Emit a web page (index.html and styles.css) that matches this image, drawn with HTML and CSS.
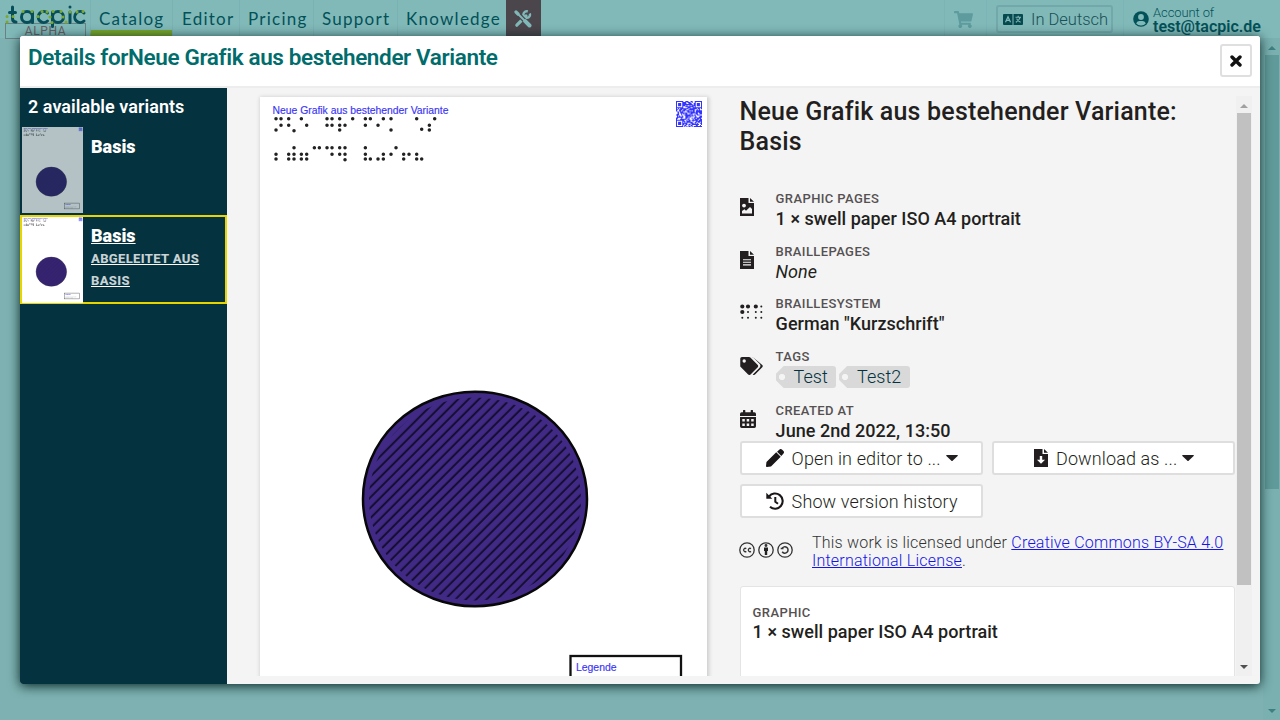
FILE: index.html
```html
<!DOCTYPE html>
<html lang="en">
<head>
<meta charset="utf-8">
<title>tacpic – Catalog</title>
<link rel="stylesheet" href="styles.css">
</head>
<body>
<svg class="defs" aria-hidden="true">
  <defs>
    <pattern id="hatch" width="7.350" height="7.350" patternUnits="userSpaceOnUse" patternTransform="rotate(-45)"><path d="M0 3.5H8" stroke="#130c2c" stroke-width="1.900"/></pattern>
    <symbol id="sheet" viewBox="260 97 447 632" preserveAspectRatio="none">
      <rect x="260" y="97" width="447" height="632" fill="#fff"/>
      <text class="sheet-text" x="272.5" y="114" textLength="176" lengthAdjust="spacingAndGlyphs">Neue Grafik aus bestehender Variante</text>
      <g transform="translate(250 88) scale(.33333)" fill="none" stroke="#222" stroke-width="10.500" stroke-linecap="round">
        <path d="M78 92h.1M93 92h.1M116 92h.1M154 92h.1M231 92h.1M246 92h.1M269 92h.1M308 92h.1M346 92h.1M361 92h.1M400 92h.1M423 92h.1M500 92h.1M554 92h.1"/>
        <path d="M93 112h.1M116 112h.1M170 112h.1M231 112h.1M246 112h.1M269 112h.1M285 112h.1M346 112h.1M384 112h.1M538 112h.1M78 126h.1M132 128h.1M269 126h.1M423 126h.1M515 124h.1M538 126h.1"/>
        <path d="M132 179h.1M193 179h.1M208 179h.1M231 179h.1M246 179h.1M269 179h.1M285 179h.1M346 179h.1M438 179h.1"/>
        <path d="M78 199h.1M116 199h.1M132 199h.1M154 199h.1M170 199h.1M246 199h.1M269 199h.1M285 199h.1M346 199h.1M400 199h.1M423 199h.1M461 199h.1M477 199h.1M500 199h.1"/>
        <path d="M78 213h.1M116 213h.1M132 213h.1M154 213h.1M170 213h.1M285 215h.1M346 213h.1M361 213h.1M384 213h.1M400 213h.1M461 213h.1M500 213h.1M515 213h.1"/>
      </g>
      <g id="qr" stroke="#3434ff" stroke-width="1.05"></g>
      <ellipse cx="475" cy="499" rx="112" ry="107.3" fill="#402a85" stroke="#080808" stroke-width="2.5"/>
      <ellipse cx="475" cy="499" rx="106" ry="101.500" fill="url(#hatch)"/>
      <rect x="570.5" y="656" width="110.500" height="43" fill="#fff" stroke="#111" stroke-width="2.300"/>
      <text class="sheet-text" x="576" y="671" textLength="40.500" lengthAdjust="spacingAndGlyphs">Legende</text>
      <path d="M577 684h45M630 684h30M577 691h60" stroke="#555" stroke-width="2" stroke-dasharray="3 3"/>
    </symbol>
    <symbol id="caret" viewBox="0 0 12 6"><path d="M.6 0h10.800q.8.200.2.900L6.600 5.700q-.6.500-1.200 0L.4.900Q-.1.200.6 0z" fill="currentColor"/></symbol>
  </defs>
</svg>

<div class="page">
  <header class="topbar">
    <div class="brand">
      <svg class="logo" width="84" height="28" viewBox="0 0 84 28">
        <g fill="none" stroke="#064f5a" stroke-width="3" stroke-linecap="round">
          <path d="M7.500 4v11.500q0 3.500 3.500 3.500M4.500 9.500h6"/><circle cx="22" cy="14" r="5.500"/><path d="M27.500 9v10.500M42.500 10a5.500 5.500 0 1 0 0 8"/><circle cx="53" cy="14" r="5.500"/><path d="M47.500 9v14.500M65 9v10.500M65 4v.1M79 10a5.500 5.500 0 1 0 0 8"/>
        </g>
        <path d="M2 13.500h.1M2 19h.1M8 13.500h.1M18 8.500h.1M27 8.500h.1M33 13.500h.1M37 8.500h.1M42 9h.1M45 14h.1M48 8.500h.1M56 8.500h.1M58 14h.1M47 19.500h.1M61 19h.1M65 9h.1M72 9h.1M78 8.500h.1" stroke="#7ba92d" stroke-width="3" stroke-linecap="round"/>
      </svg>
      <div class="alpha">ALPHA</div>
    </div>
    <nav class="nav">
      <a class="nav-item nav-catalog active"><span>Catalog</span></a>
      <a class="nav-item nav-editor"><span>Editor</span></a>
      <a class="nav-item nav-pricing"><span>Pricing</span></a>
      <a class="nav-item nav-support"><span>Support</span></a>
      <a class="nav-item nav-knowledge"><span>Knowledge</span></a>
      <a class="tools"><svg width="18" height="18" viewBox="0 0 18 18" fill="none" stroke="#80b7b7" stroke-linecap="round"><path d="M2.800 15.200L12 6" stroke-width="3.200"/><path d="M15.800 3.500a3.300 3.300 0 1 1-2-2" stroke-width="2.400" stroke-linecap="butt"/><path d="M3 3l12 12" stroke="#4b454c" stroke-width="4.500" stroke-linecap="butt"/><path d="M2 2l2 2" stroke-width="3.200"/><path d="M3 3l7 7" stroke-width="1.900"/><path d="M11.200 11.200l4.300 4.300" stroke-width="4"/></svg></a>
    </nav>
    <div class="cart"><svg width="19" height="17" viewBox="0 0 576 512"><path fill="#5d9b9e" d="M528 302l47-208c4-15-8-30-23-30H159l-9-45C148 8 138 0 126 0H24C11 0 0 11 0 24v16c0 13 11 24 24 24h70l70 343a56 56 0 1 0 67 9h210a56 56 0 1 0 63-11l6-25c3-15-8-29-24-29H218l-7-32h294c11 0 21-8 23-17z"/></svg></div>
    <div class="lang-wrap"><button class="lang"><svg width="20" height="11" viewBox="0 0 20 12" preserveAspectRatio="none"><path d="M0 1q0-1 1-1h8.500v12H1q-1 0-1-1zM10.500 0H19q1 0 1 1v10q0 1-1 1h-8.500z" fill="#06494f"/><path d="M2.500 9L5 3l2.500 6M3.500 7h3M12.500 3.500h5.500M15.200 2v1.500M17 4q-.7 3-4.200 5M13.600 5q1 2.500 4 4" fill="none" stroke="#81b9b9" stroke-width="1.200"/></svg><span>In Deutsch</span></button></div>
    <div class="account">
      <svg width="16" height="16" viewBox="0 0 16 16"><circle cx="8" cy="8" r="7.800" fill="#035158"/><circle cx="8" cy="6" r="2.900" fill="#81b9b9"/><path d="M3.200 12.500q.6-2.600 3-2.600h3.600q2.400 0 3 2.600A6.200 6.200 0 0 1 8 14.500a6.200 6.200 0 0 1-4.800-2z" fill="#81b9b9"/></svg>
      <div class="account-text"><span class="small">Account of</span><strong>test@tacpic.de</strong></div>
    </div>
  </header>
  <div class="page-scroll"><i class="arrow up"></i><i class="thumb"></i><i class="arrow down"></i></div>
</div>

<div class="modal">
  <div class="modal-head">
    <h1>Details forNeue Grafik aus bestehender Variante</h1>
    <button class="close"><svg width="12" height="12" viewBox="0 0 12 12"><path d="M2 2l8 8M10 2l-8 8" stroke="#111" stroke-width="3.400" stroke-linecap="round"/></svg></button>
  </div>
  <div class="modal-body">
    <aside class="variants">
      <h2>2 available variants</h2>
      <div class="variant"><svg class="thumbnail dim"><use href="#sheet"/></svg><div class="variant-text"><b>Basis</b></div></div>
      <div class="variant selected"><svg class="thumbnail"><use href="#sheet"/></svg><div class="variant-text"><b>Basis</b><small>ABGELEITET AUS BASIS</small></div></div>
    </aside>
    <div class="preview"><svg class="sheet" width="447" height="632"><use href="#sheet"/></svg></div>
    <section class="details">
      <h2>Neue Grafik aus bestehender Variante: Basis</h2>
      <div class="rows">
        <div class="row"><svg class="ic" width="14" height="18" viewBox="0 0 14 18"><path d="M0 0h8.500v5H14v13H0zM10 0l4 3.800h-4z" fill="#231f20"/><circle cx="4" cy="7.600" r="1.900" fill="#f4f4f4"/><path d="M2 15.500v-2.500l2.500-1.700 1.500 1.500 4-3.800 2 2v4.500z" fill="#f4f4f4"/></svg><div><label>GRAPHIC PAGES</label><p>1 × swell paper ISO A4 portrait</p></div></div>
        <div class="row"><svg class="ic" width="14" height="18" viewBox="0 0 14 18"><path d="M0 0h8.500v5H14v13H0zM10 0l4 3.800h-4z" fill="#231f20"/><path d="M3 8.700h8M3 11.300h8M3 13.900h8" stroke="#f4f4f4" stroke-width="1.100"/></svg><div><label>BRAILLEPAGES</label><p class="none">None</p></div></div>
        <div class="row"><svg class="ic braille" width="24" height="16" viewBox="0 0 24 16" fill="none" stroke="#231f20" stroke-linecap="round"><path d="M2.300 2.500h.01M8 2.500h.01M2.300 8h.01M15.800 2.500h.01" stroke-width="4.200"/><path d="M8 8h.01M2.300 13.700h.01M8 13.700h.01M15.800 8h.01M15.800 13.700h.01M21.300 2.500h.01M21.300 8h.01M21.300 13.700h.01" stroke-width="2"/></svg><div><label>BRAILLESYSTEM</label><p>German "Kurzschrift"</p></div></div>
        <div class="row"><svg class="ic tag-ic" width="23" height="18" viewBox="0 0 640 512"><path fill="#231f20" d="M498 225L287 14A48 48 0 0 0 253 0H48C21 0 0 21 0 48v205c0 13 5 25 14 34l211 211c19 19 49 19 68 0l205-205c18-19 18-49 0-68zM112 160a48 48 0 1 1 0-96 48 48 0 0 1 0 96zm514 133L421 498c-19 19-49 19-68 0l195-195c36-36 36-72 0-108L354 0h-18q24 0 35 14l255 211c18 19 18 49 0 68z"/><path fill="none" stroke="#f4f4f4" stroke-width="28" d="M313 0l206 207q50 50 0 100L330 500"/></svg><div><label>TAGS</label><div class="tags"><span class="tag">Test</span><span class="tag tag2">Test2</span></div></div></div>
        <div class="row"><svg class="ic" width="16" height="18" viewBox="0 0 16 18"><path d="M0 6V4q0-1.700 1.700-1.700H3V.5q0-.5.500-.5h1.300q.5 0 .5.500v1.800h5.400V.5q0-.5.500-.5h1.300q.5 0 .5.500v1.800h1.300Q16 2.300 16 4v2zM0 7h16v9.300q0 1.700-1.700 1.700H1.700Q0 18 0 16.300z" fill="#231f20"/><path d="M2.300 9h2.500v2.500H2.300zm4.400 0h2.500v2.500H6.700zm4.500 0h2.500v2.500h-2.500zm-8.900 4.500h2.500V16H2.300zm4.400 0h2.500V16H6.700zm4.500 0h2.500V16h-2.500z" fill="#f4f4f4"/></svg><div><label>CREATED AT</label><p>June 2nd 2022, 13:50</p></div></div>
      </div>
      <div class="buttons">
        <button class="btn"><svg width="18" height="18" viewBox="0 0 512 512"><path fill="#1b1718" d="M291 93l128 128-277 277-114 14C12 514-2 500 0 485l13-115zm207-33l-46-46c-19-19-49-19-68 0l-69 62 121 121 62-69c19-19 19-49 0-68z"/></svg><span>Open in editor to ...</span><svg width="12" height="6"><use href="#caret"/></svg></button>
        <button class="btn"><svg width="14" height="18" viewBox="0 0 14 18"><path d="M0 0h8.500v5H14v13H0zM10 0l4 3.800h-4z" fill="#231f20"/><path d="M5.800 7h2.400v3.800H11l-4 4-4-4h2.800z" fill="#fff"/></svg><span>Download as ...</span><svg width="12" height="6"><use href="#caret"/></svg></button>
        <button class="btn"><svg width="18" height="18" viewBox="0 0 18 18" fill="none" stroke="#1b1718"><path d="M3 4.500A7.600 7.600 0 1 1 4 14.800" stroke-width="2.100"/><path d="M.3.700v6h6z" fill="#1b1718" stroke="none"/><path d="M9.300 5v4.800l2.700 2" stroke-width="2"/></svg><span>Show version history</span></button>
      </div>
      <div class="license">
        <svg width="54" height="16" viewBox="0 0 54 16" fill="none" stroke="#333" stroke-width="1.300"><circle cx="8" cy="8" r="7.200"/><circle cx="27" cy="8" r="7.200"/><circle cx="46" cy="8" r="7.200"/><path d="M7.300 6.600a1.700 1.700 0 1 0 0 2.800M12 6.600a1.700 1.700 0 1 0 0 2.800"/><circle cx="27" cy="3.500" r=".8" fill="#333"/><path d="M25 5.500h4v3.500h-.8v4h-2.400V9H25z" fill="#222" stroke="none"/><path d="M43 6.500a3.200 3.200 0 1 1 .2 3.300M41.700 6.500h2.800" stroke-width="1.500"/></svg>
        <p>This work is licensed under <a href="#">Creative Commons BY-SA 4.0 International License</a>.</p>
      </div>
      <div class="card"><label>GRAPHIC</label><p>1 × swell paper ISO A4 portrait</p></div>
    </section>
    <div class="inner-scroll"><i class="arrow up"></i><i class="thumb"></i><i class="arrow down"></i></div>
  </div>
</div>
<script src="qr.js"></script>
</body>
</html>
```

FILE: styles.css
```css
* { box-sizing: border-box; }
body { margin: 0; width: 1280px; height: 720px; overflow: hidden; background: #7eb2b2; font-family: Roboto, "Liberation Sans", sans-serif; font-size: 18px; color: #231f20; }
h1, h2, p { margin: 0; }
button { font: inherit; color: inherit; margin: 0; padding: 0; }
svg { flex: none; display: block; }
.defs { position: absolute; width: 0; height: 0; }
.sheet-text { font: 10px "Liberation Sans", sans-serif; fill: #3b35f5; stroke: #3b35f5; stroke-width: .15px; }
.page { height: 720px; }
.topbar { height: 38px; display: flex; background: #81b9b9; color: #035158; }
.brand { width: 90px; padding: 3px 0 0 5px; }
.logo { margin-bottom: -11px; }
.alpha { width: 81px; height: 16px; border: 1px solid #6c7f82; color: #6b5c63; font-size: 12px; line-height: 15px; text-align: center; letter-spacing: .6px; margin-top: 3px; }
.nav { display: flex; }
.nav-item { border-left: 1px solid #7ab1b2; padding-left: 8px; font: 400 17px/38px Lato, sans-serif; letter-spacing: 1.250px; white-space: nowrap; }
.nav-catalog { width: 82px; }
.nav-editor { width: 67px; padding-left: 9px; }
.nav-pricing { width: 74px; }
.nav-support { width: 84px; }
.nav-knowledge { width: 109px; }
.active { border-bottom: 8px solid #78a52c; }
.tools { width: 35px; background: #4b454c; padding: 10px 0 0 8px; }
.cart { width: 42px; margin-left: 403px; padding: 11px 0 0 9px; border-left: 1px solid #7cb3b4; }
.lang-wrap { width: 137px; padding: 5px 0 0 9px; border-left: 1px solid #7cb3b4; }
.lang { width: 117px; height: 28px; display: flex; align-items: center; padding-left: 5px; gap: 8px; border: 2px solid #72a8a9; border-radius: 3px; background: transparent; color: #195055; font-size: 16.500px; font-weight: 300; white-space: nowrap; }
.account { display: flex; gap: 4px; padding-top: 5px; border-left: 1px solid #7cb3b4; padding-left: 9px; flex: 1; }
.account svg { margin-top: 6px; }
.account-text { display: flex; flex-direction: column; line-height: 14px; font-size: 16px; }
.small { font-size: 13px; line-height: 15px; font-weight: 300; letter-spacing: -.1px; }
.account strong { font-weight: 600; }
.page-scroll { width: 17px; height: 682px; margin-left: auto; background: #7ab0b0; display: flex; flex-direction: column; align-items: center; color: #3e7f80; }
.page-scroll .thumb { width: 14px; height: 434px; background: #619a9a; margin-top: 5px; }
.arrow { border: 4px solid transparent; width: 0; height: 0; }
.arrow.up { border-top: 0; border-bottom-color: currentColor; margin-top: 8px; }
.arrow.down { border-bottom: 0; border-top-color: currentColor; margin: auto 0 7px; }
.modal { position: absolute; left: 20px; top: 36px; width: 1240px; height: 648px; background: #f4f4f4; border-radius: 3px; overflow: hidden; box-shadow: 0 2px 12px rgba(0,30,30,.95); }
.modal-head { height: 52px; background: #fff; border-bottom: 2px solid #ededed; padding: 8px 8px 0; display: flex; justify-content: space-between; }
.modal-head h1 { color: #006c6c; font-size: 22.500px; line-height: 27px; font-weight: 600; letter-spacing: -.365px; white-space: nowrap; }
.close { width: 32px; height: 33px; border: 2px solid #dfdfdf; border-radius: 3px; background: #fff; display: grid; place-items: center; }
.modal-body { height: 596px; display: flex; }
.variants { width: 207px; background: #04333f; color: #fff; }
.variants h2 { height: 38px; font-size: 18px; line-height: 38px; padding-left: 8px; font-weight: 600; letter-spacing: .04px; }
.variant { height: 89px; display: flex; padding: 1px 2px; border: 0; }
.thumbnail { width: 61px; height: 86px; }
.thumbnail.dim { opacity: .7; }
.variant-text { padding: 8px 10px 0 8px; line-height: 24px; font-weight: 700; }
.variant-text b, .variant-text small { display: block; }
.variant-text small { font-size: 13px; line-height: 22px; letter-spacing: .35px; color: #c9d2d5; font-weight: 800; }
.selected { border: 2px solid #e8d500; padding: 0; text-decoration: underline; }
.selected .variant-text { padding-top: 7px; }
.preview { width: 500px; height: 588px; padding: 9px 0 0 33px; overflow: hidden; }
.sheet { box-shadow: 1px 1px 4px 1px rgba(0,0,0,.17); }
.details { width: 509px; height: 588px; overflow: hidden; padding: 9px 1px 0 12.600px; }
.details h2 { font-size: 25px; line-height: 30px; font-weight: 500; height: 93px; letter-spacing: .19px; }
.rows { display: grid; grid-template-rows: 52.500px 52.500px 53px 54px 39px; }
.row { display: grid; grid-template-columns: 36px 1fr; }
.ic { margin-top: 8px; }
.braille { margin-top: 9px; }
.tag-ic { margin-top: 9px; }
label { display: block; font-size: 13px; line-height: 18px; font-weight: 500; letter-spacing: .4px; color: #555152; }
.row p, .card p { line-height: 22px; font-weight: 500; letter-spacing: .04px; white-space: nowrap; }
.row p.none { font-style: italic; font-weight: 400; }
.tags { display: flex; gap: 3px; }
.tag { width: 60.500px; height: 22px; line-height: 22px; padding-left: 18px; font-weight: 300; color: #04333f; border-radius: 3px; background: radial-gradient(circle at 6px 11px, #f4f4f4 2.800px, #d9d9d9 3.300px); clip-path: polygon(0 8px, 8px 0, 100% 0, 100% 100%, 8px 100%, 0 14px); }
.tag2 { width: 71px; }
.buttons { display: grid; grid-template-columns: 243px 243px; gap: 9px; column-gap: 9.400px; }
.btn { height: 34px; display: flex; align-items: center; padding-left: 24px; border: 2px solid #dedede; border-radius: 3px; background: #fff; font-weight: 300; letter-spacing: .12px; white-space: nowrap; }
.btn span { margin: 0 5px 0 8px; }
.btn:nth-child(2) { padding-left: 40px; }
.license { height: 68px; display: flex; padding-top: 16px; gap: 19px; color: #333; font-size: 16px; line-height: 18px; font-weight: 300; letter-spacing: .21px; }
.license svg { margin-top: 8px; margin-left: -.600px; }
.license a { color: #1515e6; }
.card { height: 140px; border: 1px solid #e4e4e4; border-radius: 3px; background: #fff; padding: 17px 12px; }
.card p { line-height: 20px; }
.inner-scroll { width: 16px; height: 580px; margin-top: 8px; background: #f0f0f0; color: #505050; display: flex; flex-direction: column; align-items: center; }
.inner-scroll .up { color: #a0a0a0; }
.inner-scroll .thumb { width: 14px; height: 472px; background: #c1c1c1; margin-top: 5px; }
```

FILE: qr.js
```js
// Draws the small matrix code in the sheet's top right corner.
const group = document.getElementById('qr');
let seed = 41;
let d = '';
for (let y = 0; y < 25; y++) {
  for (let x = 0; x < 25; x++) {
    seed = (seed * 1103515245 + 12345) % 2147483648;
    const finder = (x < 7 || x > 17) && y < 7 || x < 7 && y > 17;
    const fx = x > 17 ? x - 18 : x, fy = y > 17 ? y - 18 : y;
    const ring = Math.max(Math.abs(fx - 3), Math.abs(fy - 3));
    if (finder ? ring !== 2 : seed / 2147483648 > .36) d += `M${676 + x * 1.04} ${101.5 + y * 1.04}h1.04`;
  }
}
const path = document.createElementNS('http://www.w3.org/2000/svg', 'path');
path.setAttribute('d', d);
group.appendChild(path);
```
